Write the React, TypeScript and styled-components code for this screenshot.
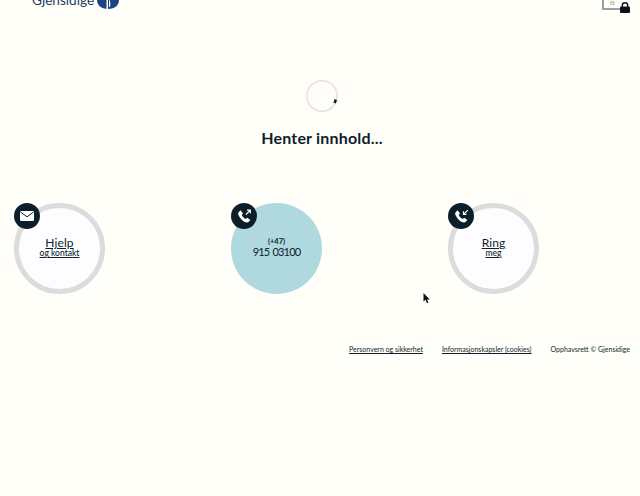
import styled, { createGlobalStyle } from 'styled-components'

const Global = createGlobalStyle`
  html, body {
    margin: 0;
    height: 100%;
    overflow: hidden;
    background: #fffef9;
  }
  body {
    font-family: Lato, "Noto Sans", sans-serif;
    color: #0e1e2b;
  }
`

const Page = styled.div`
  width: 640px;
  height: 496px;
  overflow: hidden;
  position: relative;
`

const Header = styled.header`
  height: 13px;
  display: flex;
  align-items: flex-start;
  justify-content: space-between;
  padding: 0 10px 0 32px;
  overflow: hidden;
`

const Brand = styled.div`
  display: flex;
  align-items: flex-end;
  gap: 3px;
  height: 9px;
`

const BrandName = styled.span`
  font-size: 13.6px;
  line-height: 14px;
  color: #1c3a5e;
  margin-bottom: 2px;
`

const Secure = styled.div`
  display: flex;
  align-items: flex-end;
  height: 13px;
`

const Frame = styled.div`
  width: 18px;
  height: 10px;
  border: 2px solid #9aa1a6;
  border-top: 0;
  border-right: 0;
  box-sizing: border-box;
  font-size: 7px;
  line-height: 5px;
  color: #666;
  text-align: center;
  margin-bottom: 3px;
`

const Loader = styled.section`
  display: flex;
  flex-direction: column;
  align-items: center;
  padding: 66px 0 0 4px;
`

const Title = styled.h1`
  margin: 15px 0 0;
  font-size: 16px;
  line-height: 20px;
  font-weight: 700;
  letter-spacing: 0.2px;
  color: #0e1e2b;
`

const Contacts = styled.div`
  display: grid;
  grid-template-columns: repeat(3, 91px);
  column-gap: 126px;
  padding: 55px 0 0 14px;
`

const Circle = styled.a<{ $filled?: boolean }>`
  position: relative;
  width: 91px;
  height: 91px;
  box-sizing: border-box;
  padding-bottom: 2px;
  border-radius: 50%;
  display: flex;
  flex-direction: column;
  align-items: center;
  justify-content: center;
  color: #0e1e2b;
  background: ${p => (p.$filled ? '#afd8df' : '#fdfcff')};
  border: ${p => (p.$filled ? '0' : '5px solid #dcdcdc')};
`

const Badge = styled.span<{ $filled?: boolean }>`
  position: absolute;
  top: ${p => (p.$filled ? '0' : '-5px')};
  left: ${p => (p.$filled ? '0' : '-5px')};
  width: 26px;
  height: 26px;
  border-radius: 50%;
  background: #0c1e2a;
  display: flex;
  align-items: center;
  justify-content: center;
`

const Big = styled.span`
  font-size: 12px;
  line-height: 12px;
  letter-spacing: 0.1px;
  text-decoration: underline;
  text-underline-offset: 1px;
`

const Small = styled.span`
  font-size: 8.5px;
  line-height: 9px;
  font-weight: 500;
  text-decoration: underline;
  text-underline-offset: 1px;
`

const Prefix = styled.span`
  font-size: 7.5px;
  line-height: 8px;
  font-weight: 700;
`

const PhoneNumber = styled.span`
  font-size: 11px;
  line-height: 12px;
  letter-spacing: -0.8px;
  word-spacing: 1px;
`

const Footer = styled.footer`
  display: flex;
  justify-content: flex-end;
  gap: 19px;
  padding: 50px 10px 0 0;
  font-size: 7px;
  line-height: 10px;
`

const FooterLink = styled.a`
  color: #0e1e2b;
  text-decoration: underline;
  text-underline-offset: 1px;
`

const Cursor = styled.svg`
  position: absolute;
  left: 423px;
  top: 293px;
`

const Mail = () => (
  <svg width="14" height="10" viewBox="0 0 14 10">
    <rect width="14" height="10" rx="1.2" fill="#fff" />
    <path d="M.5 1 7 5.800 13.500 1" fill="none" stroke="#0c1e2a" strokeWidth="1" />
  </svg>
)

const Phone = ({ incoming }: { incoming?: boolean }) => (
  <svg width="15" height="15" viewBox="0 0 15 15" fill="none">
    <path
      d="M1.600 3.200 3.600 1.200 6 4.400 4.800 6c.6 1.500 2.200 3.300 3.900 4l1.500-1.300 3.200 2.400-2 2c-.8.6-2.400.5-4.200-.4C5 11.500 2.800 9 1.700 6.600 1.100 5.200 1 4 1.600 3.200Z"
      fill="#fff"
    />
    {incoming ? (
      <path d="M13.800 1.200 10.200 4.800M9.500 2.300v3h3" stroke="#fff" strokeWidth="1.200" />
    ) : (
      <path d="M9 5.500 12.800 1.700M10 1.200h3.300v3.300" stroke="#fff" strokeWidth="1.200" />
    )}
  </svg>
)

export default function App() {
  return (
    <Page>
      <Global />
      <Header>
        <Brand>
          <BrandName>Gjensidige</BrandName>
          <svg width="22" height="9" viewBox="0 0 22 9">
            <path d="M0 0h22c0 5-4 9-11 9S0 5 0 0Z" fill="#1c4480" />
            <path d="M9.500 0h1.500v9H9.500ZM12.500 0c1 2 1 4 .5 7h-1V0Z" fill="#fff" />
          </svg>
        </Brand>
        <Secure>
          <Frame>ଧ</Frame>
          <svg width="10" height="11" viewBox="0 0 10 11">
            <path d="M2.300 5V3.500a2.700 2.700 0 0 1 5.400 0V5" fill="none" stroke="#0c1018" strokeWidth="1.400" />
            <rect x="0" y="4.500" width="10" height="6.500" rx="1" fill="#0c1018" />
          </svg>
        </Secure>
      </Header>

      <Loader>
        <svg width="34" height="34" viewBox="0 0 34 34">
          <circle cx="17" cy="17" r="15.200" fill="none" stroke="#e9e7e3" strokeWidth="2" />
          <path d="M30.800 20.500 29.600 24" stroke="#0e1e2b" strokeWidth="2.600" />
        </svg>
        <Title>Henter innhold...</Title>
      </Loader>

      <Contacts>
        <Circle>
          <Badge><Mail /></Badge>
          <Big>Hjelp</Big>
          <Small>og kontakt</Small>
        </Circle>
        <Circle $filled>
          <Badge $filled><Phone /></Badge>
          <Prefix>(+47)</Prefix>
          <PhoneNumber>915 03100</PhoneNumber>
        </Circle>
        <Circle>
          <Badge><Phone incoming /></Badge>
          <Big>Ring</Big>
          <Small>meg</Small>
        </Circle>
      </Contacts>

      <Footer>
        <FooterLink>Personvern og sikkerhet</FooterLink>
        <FooterLink>Informasjonskapsler (cookies)</FooterLink>
        <span>Opphavsrett © Gjensidige</span>
      </Footer>

      <Cursor width="8" height="11" viewBox="0 0 8 11">
        <path d="M.5 0v8.500l2-1.700L4 10.200l1.400-.6L4 6.500h2.800Z" fill="#111" />
      </Cursor>
    </Page>
  )
}
